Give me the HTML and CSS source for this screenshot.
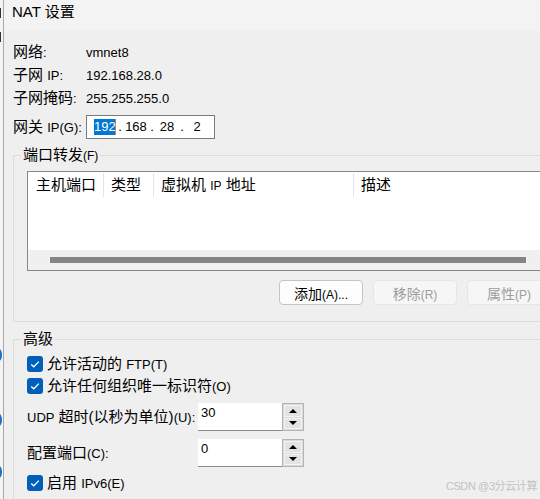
FILE: index.html
```html
<!DOCTYPE html>
<html lang="zh-CN">
<head>
  <meta charset="UTF-8">
  <title>NAT 设置</title>
  <link rel="stylesheet" href="styles.css">
</head>
<body>
  <div class="screen">
    <!-- Edge of the window behind -->
    <div class="edge">
      <span class="mark mark-a"></span>
      <span class="mark mark-b"></span>
      <span class="dot dot-a"></span>
      <span class="dot dot-b"></span>
      <span class="dot dot-c"></span>
    </div>

    <div class="dialog">
      <div class="titlebar">NAT 设置</div>

      <div class="content">
        <!-- Network info -->
        <div class="info-row"><span class="label">网络<span class="en">:</span></span><span class="en">vmnet8</span></div>
        <div class="info-row"><span class="label">子网 <span class="en">IP:</span></span><span class="en">192.168.28.0</span></div>
        <div class="info-row"><span class="label">子网掩码<span class="en">:</span></span><span class="en">255.255.255.0</span></div>
        <div class="info-row ip-row">
          <span class="label">网关 <span class="en">IP(G):</span></span>
          <div class="ip-field en">
            <span class="seg sel">192</span><span class="dot-sep">.</span>
            <span class="seg seg-wide">168</span><span class="dot-sep">.</span>
            <span class="seg">28</span><span class="dot-sep">.</span>
            <span class="seg">2</span>
          </div>
        </div>

        <!-- Port forwarding -->
        <fieldset class="group forward">
          <legend>端口转发<small>(F)</small></legend>
          <div class="list">
            <div class="list-head">
              <span class="col col-host">主机端口</span>
              <span class="col col-type">类型</span>
              <span class="col col-vm">虚拟机 <small>IP</small> 地址</span>
              <span class="col col-desc">描述</span>
            </div>
            <div class="hscroll"><div class="thumb"></div></div>
          </div>
          <div class="button-row">
            <button class="btn">添加<small>(A)...</small></button>
            <button class="btn" disabled>移除<small>(R)</small></button>
            <button class="btn" disabled>属性<small>(P)</small></button>
          </div>
        </fieldset>

        <!-- Advanced -->
        <fieldset class="group advanced">
          <legend>高级</legend>
          <label class="check-row">
            <span class="checkbox"><svg viewBox="0 0 16 16" width="16" height="16"><path d="M4.2 8.4 L6.8 10.8 L11.8 5.6" fill="none" stroke="#fff" stroke-width="1.3"/></svg></span>
            <span>允许活动的 <span class="en">FTP(T)</span></span>
          </label>
          <label class="check-row">
            <span class="checkbox"><svg viewBox="0 0 16 16" width="16" height="16"><path d="M4.2 8.4 L6.8 10.8 L11.8 5.6" fill="none" stroke="#fff" stroke-width="1.3"/></svg></span>
            <span>允许任何组织唯一标识符<span class="en">(O)</span></span>
          </label>
          <div class="spin-row">
            <span class="spin-label"><span class="en">UDP</span> 超时(以秒为单位)<span class="en">(U):</span></span>
            <input class="spin-input" type="text" value="30">
            <div class="spinner">
              <span class="spin-btn"><i class="arrow-up"></i></span>
              <span class="spin-btn"><i class="arrow-down"></i></span>
            </div>
          </div>
          <div class="spin-row second">
            <span class="spin-label">配置端口<span class="en">(C):</span></span>
            <input class="spin-input" type="text" value="0">
            <div class="spinner">
              <span class="spin-btn"><i class="arrow-up"></i></span>
              <span class="spin-btn"><i class="arrow-down"></i></span>
            </div>
          </div>
          <label class="check-row last">
            <span class="checkbox"><svg viewBox="0 0 16 16" width="16" height="16"><path d="M4.2 8.4 L6.8 10.8 L11.8 5.6" fill="none" stroke="#fff" stroke-width="1.3"/></svg></span>
            <span>启用 <span class="en">IPv6(E)</span></span>
          </label>
        </fieldset>
      </div>
    </div>

    <div class="watermark">CSDN @3分云计算</div>
  </div>
</body>
</html>
```

FILE: styles.css
```css
/* General */
body {
  margin: 0;
  background-color: #efefef;
  color: #000;
  font-family: "Liberation Sans", "Noto Sans CJK SC", sans-serif;
  font-size: 15px;
  overflow: hidden;
}

/* Latin runs are a bit smaller than the CJK text */
.en {
  font-size: 13px;
}

small {
  font-size: 12px;
}

.screen {
  display: flex;
  width: 540px;
  height: 499px;
  overflow: hidden;
  position: relative;
}

/* Window behind, just the edge shows */
.edge {
  flex: 0 0 3px;
  display: flex;
  flex-direction: column;
  background: #f4f4f4;
  border-right: 1px solid #a8a8a8;
  overflow: hidden;
}

.edge .mark {
  display: block;
  width: 1px;
  height: 10px;
  background: #333;
}

.mark-a { margin-top: 8px; }
.mark-b { margin-top: 14px; }

.edge .dot {
  display: block;
  width: 6px;
  height: 12px;
  margin-left: -4px;
  border-radius: 50%;
  background: #1a6fc4;
}

.dot-a { margin-top: 307px; }
.dot-b { margin-top: 53px; }
.dot-c { margin-top: 40px; }

/* Dialog */
.dialog {
  flex: 0 0 570px;
}

.titlebar {
  height: 31px;
  box-sizing: border-box;
  padding: 3px 0 0 8px;
  background: #f3f3f3;
  font-size: 15px;
  line-height: 18px;
}

.content {
  padding: 10px 9px 0;
}

/* Info rows */
.info-row {
  display: flex;
  align-items: center;
  height: 23px;
  line-height: 18px;
}

.info-row .label {
  width: 73px;
  flex: 0 0 73px;
  white-space: nowrap;
}

.ip-row {
  margin-top: 5px;
  height: 24px;
}

.ip-field {
  display: flex;
  align-items: center;
  width: 129px;
  height: 24px;
  box-sizing: border-box;
  padding-left: 7px;
  border: 1px solid #7a7a7a;
  background: #fff;
}

.ip-field .seg {
  width: 22px;
  text-align: center;
  line-height: 16px;
}

.ip-field .seg-wide {
  width: 24px;
}

.ip-field .sel {
  background: #0078d7;
  color: #fff;
  border-right: 1px solid #d08040;
  box-sizing: border-box;
}

.ip-field .dot-sep {
  width: 8px;
  text-align: center;
}

/* Group boxes */
.group {
  margin: 7px 0 0;
  padding: 7px 13px 16px;
  border: 1px solid #dcdcdc;
  min-width: 0;
}

.group legend {
  height: 18px;
  margin-left: -6px;
  padding: 0 2px;
  line-height: 18px;
}

.advanced {
  margin-top: 8px;
  padding-top: 5px;
  padding-bottom: 40px;
}

/* Port forwarding list */
.list {
  display: flex;
  flex-direction: column;
  height: 100px;
  box-sizing: border-box;
  border: 1px solid #828790;
  background: #fff;
}

.list-head {
  display: flex;
  height: 26px;
  align-items: center;
}

.col {
  height: 24px;
  line-height: 24px;
  padding-left: 7px;
  box-sizing: border-box;
  border-left: 1px solid #e5e5e5;
  white-space: nowrap;
}

.col-host {
  width: 75px;
  padding-left: 8px;
  border-left: none;
}

.col-type { width: 50px; }
.col-vm { width: 200px; }
.col-desc { flex: 1; }

.hscroll {
  margin-top: auto;
  height: 20px;
  box-sizing: border-box;
  padding: 7px 24px 0 22px;
  background: #f0f0f0;
}

.thumb {
  height: 6px;
  background: #858585;
}

/* Buttons */
.button-row {
  display: flex;
  justify-content: flex-end;
  gap: 10px;
  margin-top: 9px;
}

.btn {
  width: 84px;
  height: 25px;
  padding: 0;
  border: 1px solid #c4c4c4;
  border-radius: 4px;
  background: #fdfdfd;
  color: #000;
  font-family: inherit;
  font-size: 14px;
}

.btn:disabled {
  border-color: #e6e6e6;
  background: #f6f6f6;
  color: #9d9d9d;
}

/* Advanced rows */
.check-row {
  display: flex;
  align-items: center;
  gap: 4px;
  height: 22px;
  line-height: 18px;
}

.check-row.last {
  margin-top: 5px;
}

.checkbox {
  display: flex;
  width: 16px;
  height: 16px;
  border-radius: 3px;
  background: #005fb8;
}

.spin-row {
  display: flex;
  align-items: center;
  height: 28px;
  margin-top: 6px;
  line-height: 18px;
}

.spin-row.second {
  margin-top: 8px;
}

.spin-label {
  width: 171px;
  flex: 0 0 171px;
  white-space: nowrap;
}

.spin-input {
  width: 84px;
  height: 28px;
  box-sizing: border-box;
  padding: 0 0 8px 3px;
  border: none;
  border-bottom: 1px solid #8a8a8a;
  background: #fff;
  font-family: inherit;
  font-size: 13px;
  color: #000;
  outline: none;
}

.spinner {
  display: flex;
  flex-direction: column;
  gap: 1px;
  width: 22px;
  height: 28px;
  box-sizing: border-box;
  padding: 1px;
  border: 1px solid #b4b4b4;
  background: #dadada;
}

.spin-btn {
  display: flex;
  flex: 1;
  align-items: center;
  justify-content: center;
  border: 1px solid #f4f4f4;
  background: #e3e3e3;
}

.arrow-up,
.arrow-down {
  width: 0;
  height: 0;
  border-left: 4px solid transparent;
  border-right: 4px solid transparent;
}

.arrow-up { border-bottom: 4px solid #000; }
.arrow-down { border-top: 4px solid #000; }

/* Watermark over the dialog */
.watermark {
  position: absolute;
  right: 3px;
  bottom: 6px;
  color: #c2c2c2;
  font-size: 11px;
  letter-spacing: -0.4px;
}
```
